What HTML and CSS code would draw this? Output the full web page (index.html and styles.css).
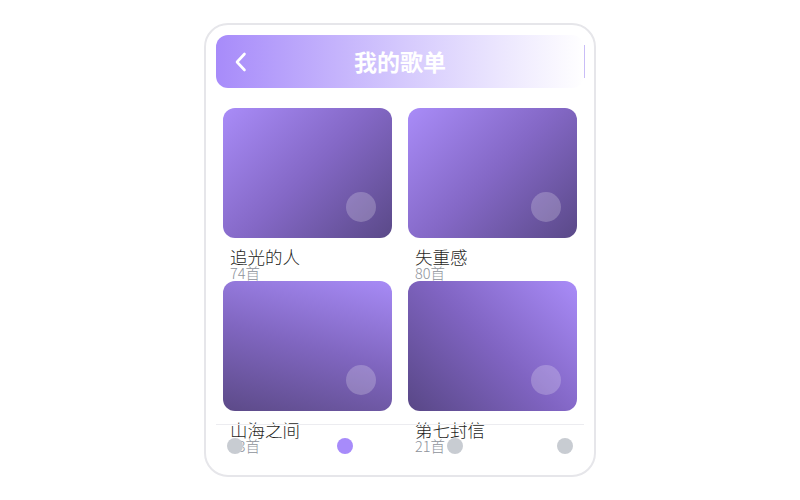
FILE: index.html
```html
<!DOCTYPE html>
<html lang="zh">
<head>
<meta charset="utf-8">
<title>我的歌单</title>
<link rel="stylesheet" href="styles.css">
</head>
<body>
<div class="frame">
  <header class="header">
    <svg class="back" width="14" height="20" viewBox="0 0 14 20"><path d="M10.5 2 L3 10 L10.5 18" fill="none" stroke="#fff" stroke-width="2.6" stroke-linecap="round" stroke-linejoin="round"/></svg>
    <h1 class="title">我的歌单</h1>
  </header>
  <div class="grid">
    <div class="item">
      <div class="cover c1"><span class="dot"></span></div>
      <div class="name">追光的人</div>
      <div class="count">74首</div>
    </div>
    <div class="item">
      <div class="cover c2"><span class="dot"></span></div>
      <div class="name">失重感</div>
      <div class="count">80首</div>
    </div>
    <div class="item">
      <div class="cover c3"><span class="dot"></span></div>
      <div class="name">山海之间</div>
      <div class="count">73首</div>
    </div>
    <div class="item">
      <div class="cover c4"><span class="dot"></span></div>
      <div class="name">第七封信</div>
      <div class="count">21首</div>
    </div>
  </div>
  <nav class="tabbar">
    <span class="tab"></span>
    <span class="tab active"></span>
    <span class="tab"></span>
    <span class="tab"></span>
  </nav>
</div>
</body>
</html>
```
FILE: styles.css
```css
html, body {
  margin: 0;
  padding: 0;
  background: #ffffff;
  font-family: "Noto Sans CJK SC", "Noto Sans", sans-serif;
}
body {
  padding: 23px 0 0 204px;
}
.frame {
  position: relative;
  width: 368px;
  height: 430px;
  padding: 10px;
  border: 2px solid #e6e6ea;
  border-radius: 24px;
  overflow: hidden;
}
.header {
  position: relative;
  height: 53px;
  border-radius: 12px;
  background: linear-gradient(90deg, #a78bfa 0%, #d4c8fd 50%, #ffffff 100%);
  display: flex;
  align-items: center;
  justify-content: center;
}
.header::after {
  content: "";
  position: absolute;
  right: -1px;
  top: 10px;
  bottom: 10px;
  width: 1px;
  background: #c9bdf7;
}
.back {
  position: absolute;
  left: 18px;
  top: 17px;
}
.title {
  margin: 0;
  color: #ffffff;
  font-size: 23px;
  font-weight: 700;
  line-height: 1;
}
.grid {
  display: grid;
  grid-template-columns: 169px 169px;
  grid-auto-rows: 173px;
  column-gap: 16px;
  margin: 20px 7px 0;
}
.item {
  position: relative;
}
.cover {
  position: relative;
  height: 130px;
  border-radius: 12px;
}
.c1, .c2 { background: linear-gradient(135deg, #a98cf8 0%, #8468c6 50%, #5a4988 100%); }
.c3 { background: linear-gradient(195deg, #a78bf6 0%, #8066c0 50%, #5c4a88 100%); }
.c4 { background: linear-gradient(225deg, #a98cf8 0%, #8064c2 50%, #584786 100%); }
.dot {
  position: absolute;
  right: 16px;
  bottom: 16px;
  width: 30px;
  height: 30px;
  border-radius: 50%;
  background: rgba(255, 255, 255, 0.22);
}
.name {
  margin: 10px 0 0 7px;
  font-size: 17.5px;
  line-height: 18px;
  font-weight: 300;
  color: #1f1f24;
}
.count {
  margin-left: 7px;
  font-size: 14.5px;
  line-height: 14px;
  font-weight: 300;
  color: #8e939b;
}
.tabbar {
  position: absolute;
  left: 10px;
  right: 10px;
  bottom: 0;
  height: 37px;
  padding: 13px 11px 0;
  border-top: 1px solid #ececf0;
  display: flex;
  justify-content: space-between;
}
.tab {
  width: 16px;
  height: 16px;
  border-radius: 50%;
  background: #c8ccd2;
}
.tab.active {
  background: #a78bfa;
}
```
